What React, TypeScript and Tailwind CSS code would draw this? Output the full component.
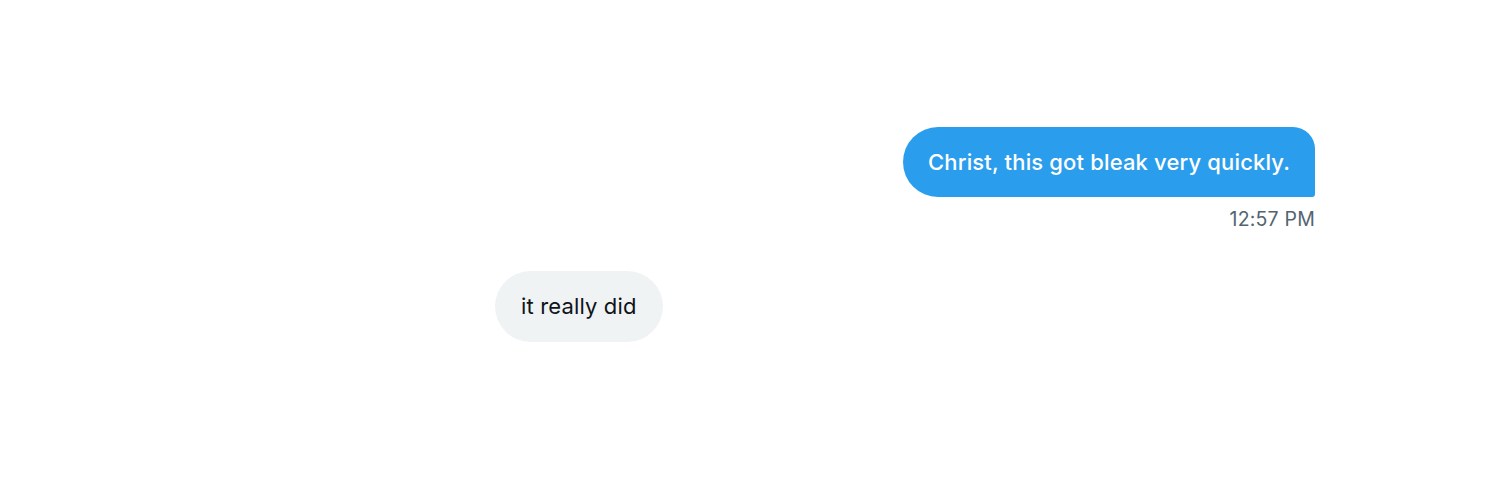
export default function App() {
  return (
    <div className="h-[500px] w-[1500px] bg-white font-['Inter','Liberation_Sans',sans-serif]">
      <div className="ml-[495px] flex w-[820px] flex-col pt-[127px]">
        <div className="flex flex-col items-end">
          <div className="flex h-[70px] items-center rounded-l-[35px] rounded-tr-[22px] rounded-br-[3px] bg-[#2b9ded] px-[25px] text-[22px] font-medium tracking-[0.15px] text-white">
            Christ, this got bleak very quickly.
          </div>
          <div className="mt-[9px] text-[19.5px] leading-[26px] tracking-[0.2px] text-[#536471]">12:57 PM</div>
        </div>
        <div className="mt-[39px] flex">
          <div className="flex h-[71px] items-center rounded-full bg-[#eff3f4] px-[26px] text-[22px] tracking-[0.15px] text-[#0f1419]">
            it really did
          </div>
        </div>
      </div>
    </div>
  );
}
